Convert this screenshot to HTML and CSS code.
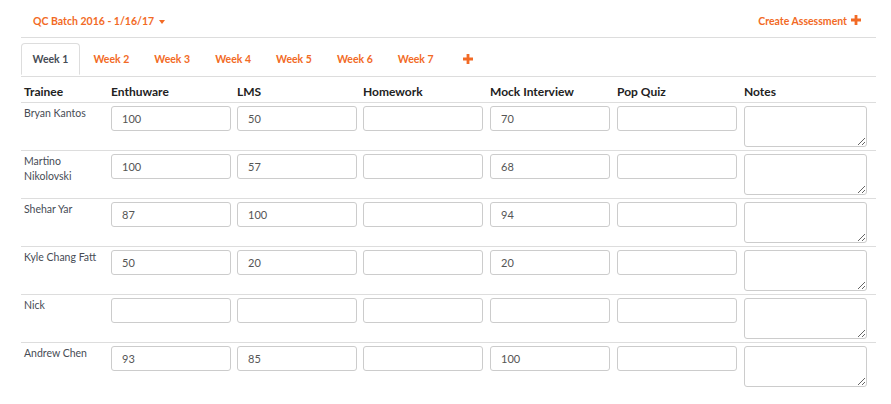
FILE: index.html
```html
<!DOCTYPE html>
<html>
<head>
<meta charset="utf-8">
<link rel="stylesheet" href="styles.css">
</head>
<body>
<div class="page">
  <div class="topbar">
    <a class="batch">QC Batch 2016 - 1/16/17 <span class="caret"></span></a>
    <a class="create">Create Assessment <svg class="plus" viewBox="0 0 10 10" width="10" height="10"><path d="M3.6 0h2.8v3.6H10v2.8H6.4V10H3.6V6.4H0V3.6h3.6z"/></svg></a>
  </div>
  <ul class="tabs">
    <li class="tab active"><a>Week 1</a></li>
    <li class="tab"><a>Week 2</a></li>
    <li class="tab"><a>Week 3</a></li>
    <li class="tab"><a>Week 4</a></li>
    <li class="tab"><a>Week 5</a></li>
    <li class="tab"><a>Week 6</a></li>
    <li class="tab"><a>Week 7</a></li>
    <li class="tab add"><a><svg class="plus" viewBox="0 0 10 10" width="10" height="10"><path d="M3.6 0h2.8v3.6H10v2.8H6.4V10H3.6V6.4H0V3.6h3.6z"/></svg></a></li>
  </ul>
  <div class="grades">
    <div class="row head">
      <div class="cell">Trainee</div>
      <div class="cell">Enthuware</div>
      <div class="cell">LMS</div>
      <div class="cell">Homework</div>
      <div class="cell">Mock Interview</div>
      <div class="cell">Pop Quiz</div>
      <div class="cell">Notes</div>
    </div>
    <div class="row">
      <div class="cell name">Bryan Kantos</div>
      <div class="cell"><input class="score" value="100"></div>
      <div class="cell"><input class="score" value="50"></div>
      <div class="cell"><input class="score" value=""></div>
      <div class="cell"><input class="score" value="70"></div>
      <div class="cell"><input class="score" value=""></div>
      <div class="cell"><textarea class="notes"></textarea></div>
    </div>
    <div class="row">
      <div class="cell name">Martino Nikolovski</div>
      <div class="cell"><input class="score" value="100"></div>
      <div class="cell"><input class="score" value="57"></div>
      <div class="cell"><input class="score" value=""></div>
      <div class="cell"><input class="score" value="68"></div>
      <div class="cell"><input class="score" value=""></div>
      <div class="cell"><textarea class="notes"></textarea></div>
    </div>
    <div class="row">
      <div class="cell name">Shehar Yar</div>
      <div class="cell"><input class="score" value="87"></div>
      <div class="cell"><input class="score" value="100"></div>
      <div class="cell"><input class="score" value=""></div>
      <div class="cell"><input class="score" value="94"></div>
      <div class="cell"><input class="score" value=""></div>
      <div class="cell"><textarea class="notes"></textarea></div>
    </div>
    <div class="row">
      <div class="cell name">Kyle Chang Fatt</div>
      <div class="cell"><input class="score" value="50"></div>
      <div class="cell"><input class="score" value="20"></div>
      <div class="cell"><input class="score" value=""></div>
      <div class="cell"><input class="score" value="20"></div>
      <div class="cell"><input class="score" value=""></div>
      <div class="cell"><textarea class="notes"></textarea></div>
    </div>
    <div class="row">
      <div class="cell name">Nick</div>
      <div class="cell"><input class="score" value=""></div>
      <div class="cell"><input class="score" value=""></div>
      <div class="cell"><input class="score" value=""></div>
      <div class="cell"><input class="score" value=""></div>
      <div class="cell"><input class="score" value=""></div>
      <div class="cell"><textarea class="notes"></textarea></div>
    </div>
    <div class="row last">
      <div class="cell name">Andrew Chen</div>
      <div class="cell"><input class="score" value="93"></div>
      <div class="cell"><input class="score" value="85"></div>
      <div class="cell"><input class="score" value=""></div>
      <div class="cell"><input class="score" value="100"></div>
      <div class="cell"><input class="score" value=""></div>
      <div class="cell"><textarea class="notes"></textarea></div>
    </div>
  </div>
</div>
</body>
</html>
```

FILE: styles.css
```css
* { box-sizing: border-box; }
html, body { margin: 0; padding: 0; background: #fff; }
body {
  font-family: Lato, "Liberation Sans", sans-serif;
  font-size: 11px;
  color: #474c55;
}
.page { padding: 0 15px 0 21px; }

.topbar {
  display: flex;
  justify-content: space-between;
  align-items: center;
  padding: 14px 15px 8px 12px;
  border-bottom: 1px solid #ddd;
  line-height: 15px;
}
.batch, .create {
  color: #f26a25;
  font-weight: bold;
  font-size: 10.5px;
  display: flex;
  align-items: center;
}
.caret {
  display: inline-block;
  width: 0; height: 0;
  margin-left: 5px;
  border-top: 4px solid #f26a25;
  border-left: 3.5px solid transparent;
  border-right: 3.5px solid transparent;
}
.create .plus { margin-left: 4px; position: relative; top: -2px; }
.plus { fill: #f26a25; display: block; }

.tabs {
  list-style: none;
  margin: 5px 0 0 0;
  padding: 0;
  display: flex;
  border-bottom: 1px solid #ddd;
}
.tab { margin-right: 2px; margin-bottom: -1px; }
.tab a {
  display: block;
  padding: 8px 10.5px;
  line-height: 14px;
  font-size: 10.5px;
  border: 1px solid transparent;
  border-radius: 4px 4px 0 0;
  color: #f26a25;
  font-weight: bold;
}
.tab.active a {
  color: #474c55;
  border-color: #ddd;
  border-bottom-color: #fff;
  background: #fff;
}
.tab.add { margin-left: 3px; }
.tab.add a { padding: 10px 12px 12px; }

.row {
  display: grid;
  grid-template-columns: 87px 126px 126px 127px 127px 127px 1fr;
  border-top: 1px solid #ddd;
}
.row.head { border-top: 0; border-bottom: 1px solid #ddd; }
.row.head + .row { border-top: 0; }
.head .cell {
  font-weight: bold;
  font-size: 12px;
  color: #222;
  padding: 8px 3px 3px;
  line-height: 14px;
}
.cell { padding: 3px 3px 3px 3px; line-height: 15px; }
.cell.name { color: #474c55; padding-top: 3px; padding-right: 6px; font-size: 10.5px; }

.score {
  display: block;
  width: 120px;
  height: 25px;
  border: 1px solid #ccc;
  border-radius: 3px;
  padding: 0 10px;
  font-family: Lato, "Liberation Sans", sans-serif;
  font-size: 11px;
  color: #555;
  background: #fff;
  outline: none;
}
.notes {
  display: block;
  width: 123px;
  height: 41px;
  border: 1px solid #ccc;
  border-radius: 3px;
  padding: 4px 8px;
  font-family: Lato, "Liberation Sans", sans-serif;
  font-size: 11px;
  margin: 0;
  outline: none;
}
```
